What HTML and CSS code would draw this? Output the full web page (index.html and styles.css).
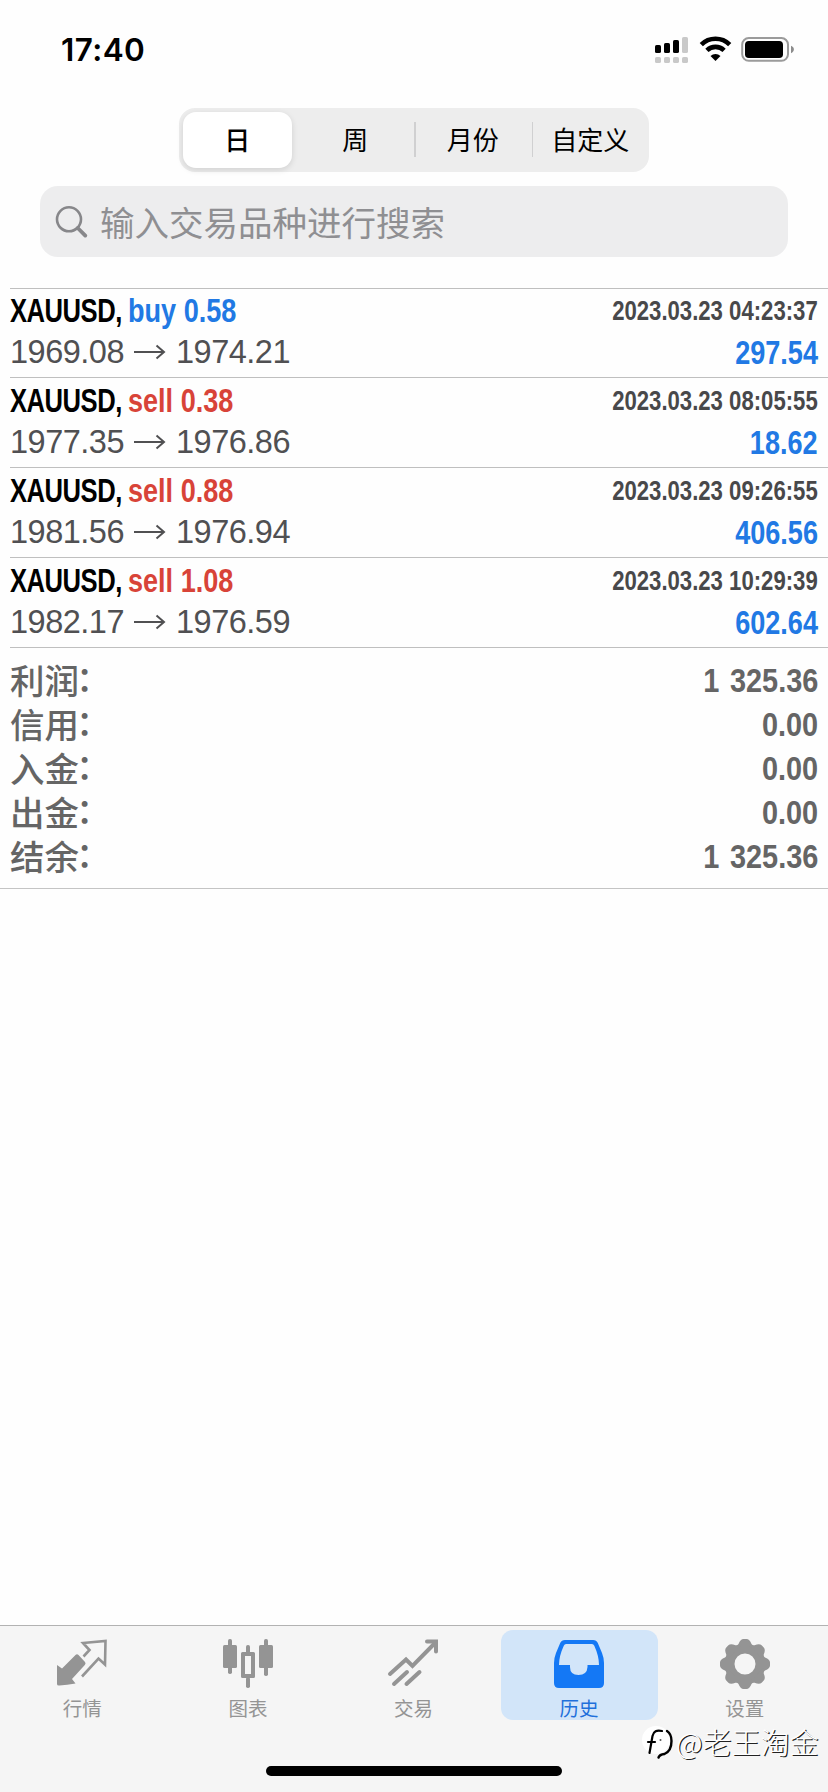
FILE: index.html
```html
<!DOCTYPE html>
<html lang="zh-CN">
<head>
<meta charset="utf-8">
<title>历史</title>
<link rel="stylesheet" href="styles.css">
</head>
<body>
<div class="screen">
  <header class="status">
    <span class="clock">17:40</span>
    <svg class="status-icons" width="142" height="30" viewBox="0 0 142 30">
      <g fill="#000"><rect x="1" y="10" width="6" height="8" rx="1.6"/><rect x="10" y="8" width="6" height="10" rx="1.6"/><rect x="19" y="5" width="6" height="13" rx="1.6"/></g>
      <g fill="#c9c9c9"><rect x="28" y="2" width="6" height="16" rx="1.6"/><rect x="1" y="22" width="6" height="6" rx="1.6"/><rect x="10" y="22" width="6" height="6" rx="1.6"/><rect x="19" y="22" width="6" height="6" rx="1.6"/><rect x="28" y="22" width="6" height="6" rx="1.6"/></g>
      <g fill="none" stroke="#000" stroke-width="4.6"><path d="M47.3 9.6a20.3 20.3 0 0 1 28.4 0"/><path d="M52.9 15.3a12.4 12.4 0 0 1 17.2 0"/></g>
      <path d="M61.5 26l-5-5.1a7.4 7.4 0 0 1 10 0z" fill="#000"/>
      <rect x="88.2" y="3" width="45.8" height="22.8" rx="6.6" fill="none" stroke="#9b9b9b" stroke-width="2"/>
      <rect x="91" y="6" width="38" height="17" rx="3.8" fill="#000"/>
      <path d="M137 10.8v7.4c3.9-1.4 3.9-6 0-7.4z" fill="#8c8c8c"/>
    </svg>
  </header>

  <nav class="segments">
    <span class="segment selected">日</span>
    <span class="segment">周</span>
    <span class="segment divided">月份</span>
    <span class="segment divided">自定义</span>
  </nav>

  <div class="search">
    <svg width="34" height="34" viewBox="0 0 34 34" fill="none" stroke="#87878a"><circle cx="14" cy="14.3" r="12" stroke-width="2.6"/><path d="M22.7 23L30.3 30.6" stroke-width="3.8" stroke-linecap="round"/></svg>
    <span>输入交易品种进行搜索</span>
  </div>

  <main class="deals">
    <article class="deal">
      <div class="line"><span class="title"><span class="narrow left symbol">XAUUSD,</span><span class="narrow left buy">buy 0.58</span></span><time class="narrow right time">2023.03.23 04:23:37</time></div>
      <div class="line prices"><span class="route">1969.08<svg class="arrow" viewBox="0 0 32 16"><path d="M0 8H30M22.5 1.5L30 8L22.5 14.5"/></svg>1974.21</span><span class="narrow right profit">297.54</span></div>
    </article>
    <article class="deal">
      <div class="line"><span class="title"><span class="narrow left symbol">XAUUSD,</span><span class="narrow left sell">sell 0.38</span></span><time class="narrow right time">2023.03.23 08:05:55</time></div>
      <div class="line prices"><span class="route">1977.35<svg class="arrow" viewBox="0 0 32 16"><path d="M0 8H30M22.5 1.5L30 8L22.5 14.5"/></svg>1976.86</span><span class="narrow right profit">18.62</span></div>
    </article>
    <article class="deal">
      <div class="line"><span class="title"><span class="narrow left symbol">XAUUSD,</span><span class="narrow left sell">sell 0.88</span></span><time class="narrow right time">2023.03.23 09:26:55</time></div>
      <div class="line prices"><span class="route">1981.56<svg class="arrow" viewBox="0 0 32 16"><path d="M0 8H30M22.5 1.5L30 8L22.5 14.5"/></svg>1976.94</span><span class="narrow right profit">406.56</span></div>
    </article>
    <article class="deal">
      <div class="line"><span class="title"><span class="narrow left symbol">XAUUSD,</span><span class="narrow left sell">sell 1.08</span></span><time class="narrow right time">2023.03.23 10:29:39</time></div>
      <div class="line prices"><span class="route">1982.17<svg class="arrow" viewBox="0 0 32 16"><path d="M0 8H30M22.5 1.5L30 8L22.5 14.5"/></svg>1976.59</span><span class="narrow right profit">602.64</span></div>
    </article>
  </main>

  <section class="totals">
    <div class="total"><span class="label">利润<span class="colon">：</span></span><b class="narrow right">1 325.36</b></div>
    <div class="total"><span class="label">信用<span class="colon">：</span></span><b class="narrow right">0.00</b></div>
    <div class="total"><span class="label">入金<span class="colon">：</span></span><b class="narrow right">0.00</b></div>
    <div class="total"><span class="label">出金<span class="colon">：</span></span><b class="narrow right">0.00</b></div>
    <div class="total"><span class="label">结余<span class="colon">：</span></span><b class="narrow right">1 325.36</b></div>
  </section>

  <footer class="tabbar">
    <div class="tabs">
      <div class="tab">
        <svg width="52" height="52" viewBox="0 0 52 52"><path d="M1 46V27l5 3.5L19.5 17q1.5-1.5 3 0l6.5 7q1.2 1.5-.2 3L16 41l3.5 4.500Q11 47 3.500 47.500 1 47.800 1 46z" fill="#949494"/><path d="M27.5 18.5l6-6.5-6.500-7L49.500 3 49 26.500 42.500 20.500 26 38.500" fill="none" stroke="#949494" stroke-width="2.6"/></svg>
        <span>行情</span>
      </div>
      <div class="tab">
        <svg width="52" height="52" viewBox="0 0 52 52" fill="#949494"><rect x="1" y="7" width="14" height="23" rx="1.5"/><rect x="6" y="1" width="4" height="35" rx="1.8"/><rect x="37" y="7" width="14" height="23" rx="1.5"/><rect x="42" y="1" width="4" height="37" rx="1.8"/><rect x="24" y="7" width="4" height="8" rx="1.8"/><rect x="24" y="39" width="4" height="11" rx="1.8"/><path fill-rule="evenodd" d="M20.5 14h11q1.5 0 1.5 1.5v23q0 1.5-1.5 1.5h-11q-1.5 0-1.5-1.5v-23q0-1.5 1.5-1.5zM23 18v18h6V18z"/></svg>
        <span>图表</span>
      </div>
      <div class="tab">
        <svg width="52" height="52" viewBox="0 0 52 52" fill="none" stroke="#949494" stroke-width="4" stroke-linecap="round"><path d="M3 36L19 21.5l6.5 6.5L48 5"/><path d="M40 3.5h9v10"/><path d="M7 46L20 34M19.5 46L32.5 34"/></svg>
        <span>交易</span>
      </div>
      <div class="tab active">
        <svg width="52" height="52" viewBox="0 0 52 52"><path fill="#1478f5" fill-rule="evenodd" d="M12 2h28q3.5 0 4.8 3L49 15q2 5 2 10v20q0 5-5 5H6q-5 0-5-5V25q0-5 2-10L7.2 5Q8.5 2 12 2zM13 6q-1.5 0-2.2 1.7Q6 18 6 27h11v2q0 8 8.5 8t9-8v-2H46Q46 18 41.3 7.7 40.5 6 39 6z"/></svg>
        <span>历史</span>
      </div>
      <div class="tab">
        <svg width="52" height="52" viewBox="0 0 52 52"><defs><g id="tooth"><path d="M15.500 10L19.500 6Q21.500 1 24.500 1h3Q30.500 1 32.500 6L36.500 10z"/></g></defs><g fill="#949494"><path fill-rule="evenodd" d="M26 6a20 20 0 1 0 0 40 20 20 0 1 0 0-40zM26 15.5a10.5 10.5 0 1 1 0 21 10.5 10.5 0 1 1 0-21z"/><use href="#tooth"/><use href="#tooth" transform="rotate(45 26 26)"/><use href="#tooth" transform="rotate(90 26 26)"/><use href="#tooth" transform="rotate(135 26 26)"/><use href="#tooth" transform="rotate(180 26 26)"/><use href="#tooth" transform="rotate(225 26 26)"/><use href="#tooth" transform="rotate(270 26 26)"/><use href="#tooth" transform="rotate(315 26 26)"/></g></svg>
        <span>设置</span>
      </div>
    </div>
    <div class="home"></div>
  </footer>

  <div class="watermark">
    <svg width="34" height="36" viewBox="0 0 34 36" fill="none" stroke-linecap="round"><circle cx="14" cy="15" r="14" fill="#fff"/><path d="M20 6q-8-2-9.5 5L7.5 28" stroke="#000" stroke-width="2.2"/><path d="M6 17h7" stroke="#000" stroke-width="2.2"/><path d="M25 6q4.5 3 4.5 10 0 10-7 13-5 .5-6 3.5" stroke="#000" stroke-width="2.4"/><circle cx="18.5" cy="15" r="1" fill="#555"/></svg>
    <span>@老王淘金</span>
  </div>
</div>
</body>
</html>
```
FILE: styles.css
```css
body {
  margin: 0;
  background: #fff;
  font-family: "Liberation Sans", "Noto Sans CJK SC", sans-serif;
}

.screen {
  position: relative;
  display: flex;
  flex-direction: column;
  width: 828px;
  height: 1792px;
  overflow: hidden;
  background: #fefefe;
}

.status {
  display: flex;
  flex: none;
  justify-content: space-between;
  align-items: flex-start;
  box-sizing: border-box;
  height: 108px;
  padding: 30px 32px 0 61px;
}

.clock {
  font: 600 31.5px/39px Inter, sans-serif;
  letter-spacing: 0.4px;
}

.status-icons {
  margin-top: 5px;
}

.segments {
  display: grid;
  flex: none;
  grid-template-columns: repeat(4, 1fr);
  align-self: center;
  box-sizing: border-box;
  width: 470px;
  height: 64px;
  padding: 4px 0;
  border-radius: 16px;
  background: #ededed;
}

.segment {
  position: relative;
  font: 400 26px/53px "Noto Sans CJK SC", sans-serif;
  text-align: center;
}

.selected {
  margin: 0 5px 0 4px;
  border-radius: 13px;
  background: #fff;
  box-shadow: 0 2px 6px rgba(0, 0, 0, 0.12);
  font-weight: 500;
}

.divided::before {
  content: "";
  position: absolute;
  top: 10px;
  left: 0;
  width: 1.5px;
  height: 35px;
  background: #d0d0d1;
}

.search {
  display: flex;
  flex: none;
  align-items: center;
  gap: 11px;
  box-sizing: border-box;
  height: 71px;
  margin: 14px 40px 31px;
  padding: 0 15px;
  border-radius: 18px;
  background: #ededee;
  color: #8f8f92;
  font: 400 34.5px/69px "Noto Sans CJK SC", sans-serif;
}

.deals {
  flex: none;
  margin-left: 10px;
  border-top: 1px solid #bfbfbf;
}

.deal {
  box-sizing: border-box;
  height: 90px;
  padding: 5px 10px 0 0;
  border-bottom: 1px solid #bfbfbf;
}

.deal:first-child {
  height: 89px;
  padding-top: 4px;
}

.line {
  display: flex;
  justify-content: space-between;
  height: 36px;
  font-size: 33px;
  line-height: 36px;
  white-space: nowrap;
}

.title {
  display: flex;
}

.narrow {
  display: inline-block;
  font-weight: 700;
  transform: scaleX(0.82);
}

.left {
  transform-origin: left;
}

.right {
  transform-origin: right;
}

.symbol {
  width: 118px;
  letter-spacing: -0.6px;
  transform: scaleX(0.775);
}

.buy,
.profit {
  color: #2179e4;
}

.sell {
  color: #d84338;
}

.time {
  color: #48484a;
  font-size: 27px;
  line-height: 37px;
}

.prices {
  height: 45px;
  line-height: 47px;
}

.route {
  color: #505052;
  font-size: 32.5px;
  letter-spacing: -0.5px;
}

.arrow {
  width: 32px;
  height: 16px;
  margin: 0 10px 3px 10px;
  fill: none;
  stroke: #505052;
  stroke-width: 2;
}

.profit {
  line-height: 48px;
}

.totals {
  flex: none;
  box-sizing: border-box;
  height: 241px;
  padding: 10px 10px 0;
  border-bottom: 1px solid #c4c4c4;
  color: #656565;
}

.total {
  display: flex;
  justify-content: space-between;
  height: 44px;
}

.label {
  font: 500 34.5px/42px "Noto Sans CJK SC", sans-serif;
}

.colon {
  display: inline-block;
  margin-left: -3px;
  transform: translateY(-3px);
}

.total b {
  font: 700 34px/45px "Liberation Sans", sans-serif;
  word-spacing: 3px;
  transform: scaleX(0.85);
}

.tabbar {
  display: flex;
  flex-direction: column;
  align-items: center;
  box-sizing: border-box;
  height: 167px;
  margin-top: auto;
  border-top: 1px solid #b2b2b2;
  background: #f5f5f5;
}

.tabs {
  display: grid;
  grid-template-columns: repeat(5, 1fr);
  width: 100%;
  padding-top: 4px;
}

.tab {
  display: flex;
  flex-direction: column;
  align-items: center;
  gap: 6px;
  box-sizing: border-box;
  height: 90px;
  margin: 0 4px;
  padding: 8px 1px 0 0;
  border-radius: 12px;
  color: #949494;
  font: 400 19.5px/24px "Noto Sans CJK SC", sans-serif;
}

.active {
  background: #d2e5f9;
  color: #1f70db;
}

.home {
  width: 296px;
  height: 10px;
  margin-top: 46px;
  border-radius: 5px;
  background: #000;
}

.watermark {
  position: absolute;
  top: 1725px;
  left: 642px;
  display: flex;
  align-items: flex-start;
  color: #fff;
  font: 300 29px/32px "Noto Sans CJK SC", sans-serif;
  text-shadow: 1.3px 1.3px 0 #222;
}
```
